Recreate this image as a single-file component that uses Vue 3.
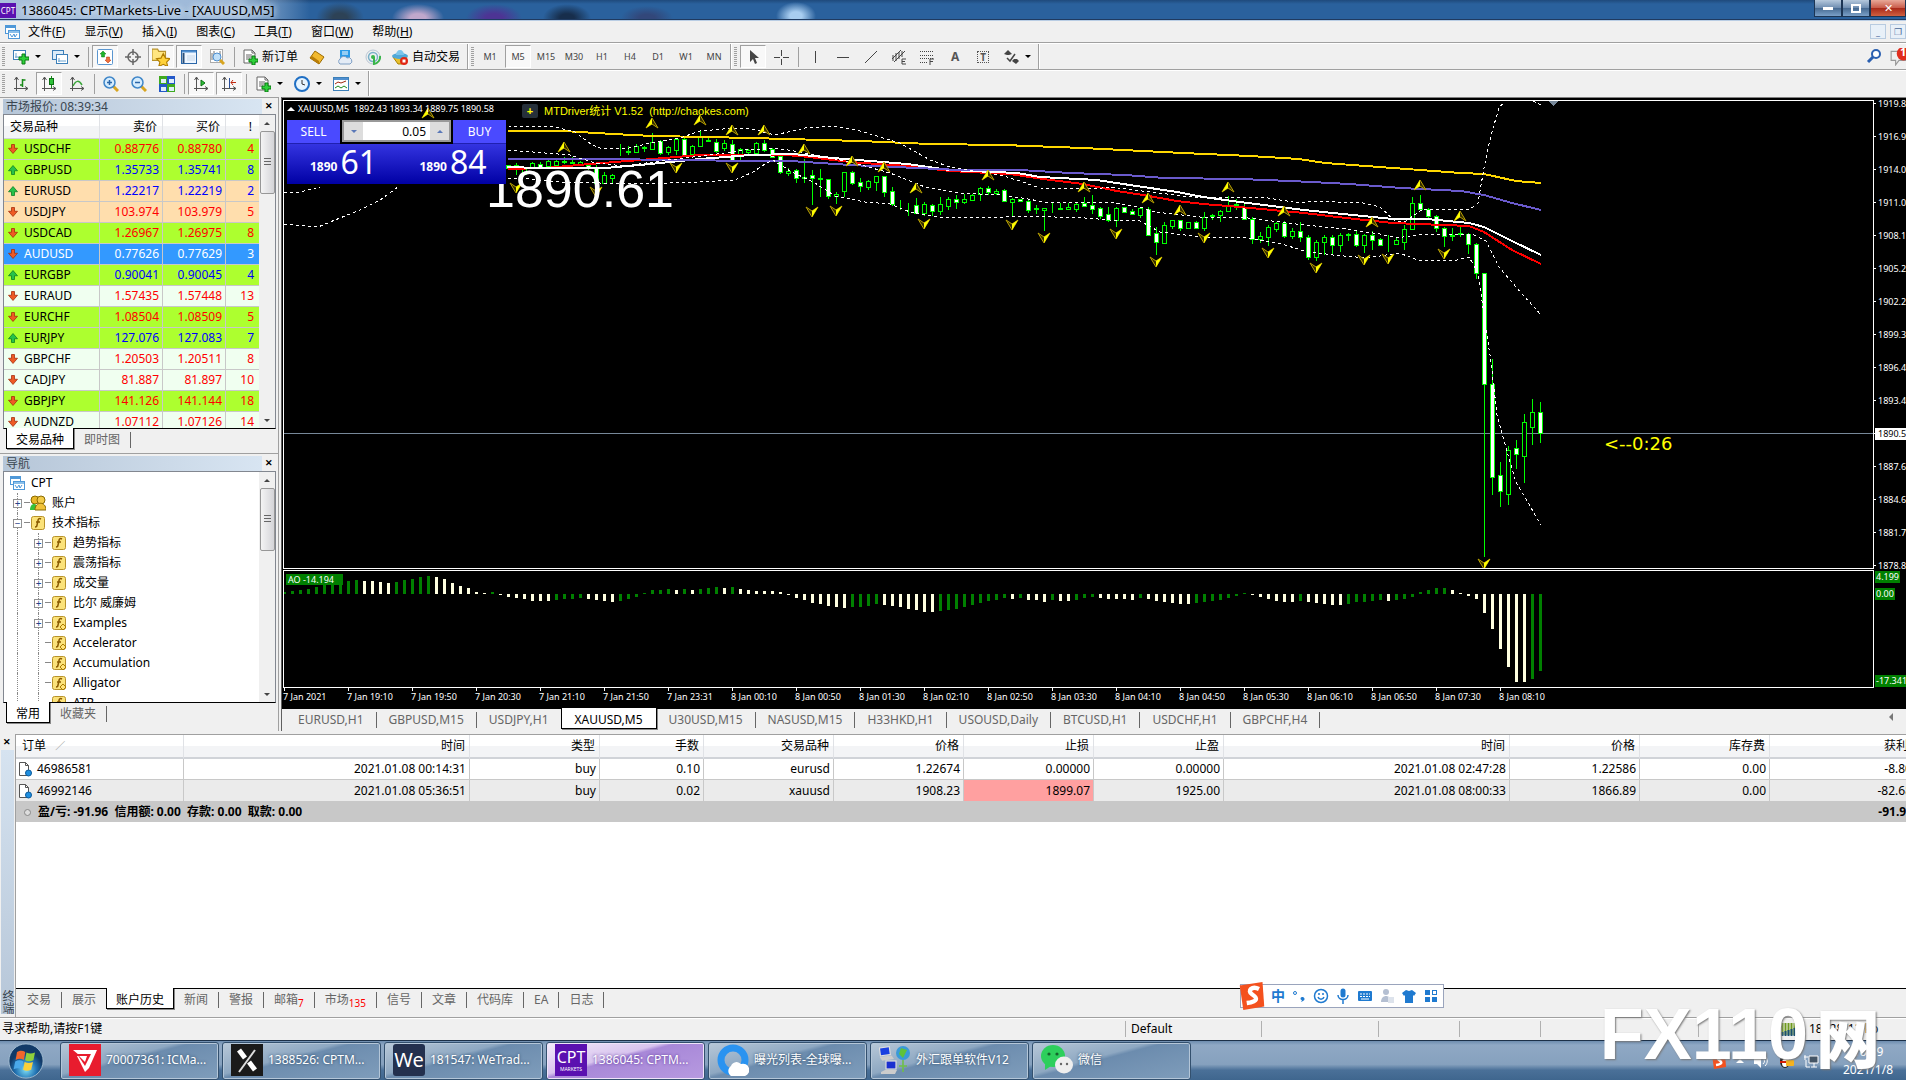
<script setup>
import { h } from 'vue'

const doc = '<path d="M2 1h8l3 3v10H2z" fill="#fff" stroke="#666"/><path d="M10 1v3h3M4 6h6M4 8h6M4 10h4" fill="none" stroke="#666"/>'
const plus = '<path d="M10 7h3v3h3v3h-3v3h-3v-3H7v-3h3z" fill="#2fd03a" stroke="#0b7a12"/>'
const axes = '<path d="M3.500 1v14M1 12.500h14M1.500 4l2-3 2 3M12 10.500l3 2-3 2" fill="none" stroke="#555"/>'
const fn = '<rect x="1.500" y="1.500" width="13" height="13" rx="2" fill="#fbe27a" stroke="#b8922a"/><path d="M11 4c-2-1-3 0-3 2l-1 4c0 2-1 2-2 2M6 7h4" fill="none" stroke="#8a5a00" stroke-width="1.500"/>'
const icons = {
  app: '<rect x="1.500" y="1.500" width="10" height="8" fill="#fff" stroke="#4f98d8"/><path d="M1 3h11" stroke="#4f98d8" stroke-width="2"/><rect x="4.500" y="6.500" width="11" height="8" fill="#fff" stroke="#4f98d8"/><path d="M5 8h10" stroke="#8cc0ea" stroke-width="2"/><path d="M6 10l2 3 2-3 1 3 2-3" fill="none" stroke="#4f98d8"/>',
  newchart: '<rect x="0.500" y="1.500" width="12" height="9" fill="#fff" stroke="#3c7fb8"/><path d="M3 4v5M2 8h8" stroke="#6aa3d0"/><path d="M9 5h3v3h4v3h-4v4H9v-4H6V8h3z" fill="#2fd03a" stroke="#0b7a12"/>',
  profiles: '<rect x="0.500" y="1.500" width="11" height="9" fill="#dcecf9" stroke="#3c7fb8"/><rect x="4.500" y="5.500" width="11" height="9" fill="#fff" stroke="#3c7fb8"/><path d="M6 12h8M7 9v4" stroke="#6aa3d0"/>',
  market: '<rect x="0.500" y="0.500" width="15" height="15" rx="1" fill="#fff" stroke="#5a96d0"/><path d="M6 2l3 3H7.500v3h-3V5H3z" fill="#1fb52c" stroke="#0b7a12" stroke-width=".5"/><path d="M11 14l3-3h-1.500V8h-3v3H8z" fill="#f0703c" stroke="#b03008" stroke-width=".5"/>',
  cross: '<circle cx="8" cy="8" r="5" fill="none" stroke="#666" stroke-width="1.500"/><path d="M8 0v6M8 10v6M0 8h6M10 8h6" stroke="#666" stroke-width="1.500"/>',
  star: '<path d="M0 3V1h5l1 2h6v8H0z" fill="#ffe680" stroke="#b8922a"/><path d="M10 5l2 4 4 .5-3 3 1 4-4-2-4 2 1-4-3-3 4-.5z" fill="#ffd23a" stroke="#b07d00"/>',
  navi: '<rect x="0.500" y="1.500" width="15" height="13" fill="#eef6ff" stroke="#2a66a8"/><path d="M1 2.500h14" stroke="#4f8fd0" stroke-width="2"/><path d="M2.500 4v10" stroke="#2a4f78" stroke-width="2"/><path d="M6 7h8M6 9h8M6 11h8" stroke="#c8d8ea"/>',
  tester: '<rect x="1.500" y="0.500" width="12" height="13" fill="#fff" stroke="#aaa"/><path d="M3 4v7M5 2v6M11 2v8" stroke="#777"/><circle cx="8" cy="8" r="4" fill="#bfe0fa" stroke="#4f8fd0"/><path d="M11 11l4 4" stroke="#d8a520" stroke-width="3"/>',
  order: doc + plus,
  gold: '<path d="M1 9l5-7 9 6-5 7z" fill="#f2b92e" stroke="#9c6b00"/><path d="M1 9l9 6v-3L3 7z" fill="#b97d08"/>',
  cloud: '<path d="M3 1h10v9H3z" fill="#2c9be8"/><path d="M5 3h6M5 5h6" stroke="#fff"/><path d="M3 15a3 3 0 010-5 4 4 0 017-1 3 3 0 013 6z" fill="#e4ecf6" stroke="#7f9fc4"/>',
  signal: '<circle cx="8" cy="8" r="7" fill="none" stroke="#b9c6d4"/><circle cx="8" cy="8" r="4.500" fill="none" stroke="#7ab0c8" stroke-width="1.500"/><circle cx="8" cy="8" r="2" fill="#39b54a"/><path d="M9 8v7a7 7 0 006-8" fill="none" stroke="#39b54a" stroke-width="2"/>',
  auto: '<path d="M1 8h14l-5 7H6z" fill="#e8c02c" stroke="#a98200"/><ellipse cx="8" cy="7" rx="8" ry="3" fill="#4fa8d8"/><path d="M4 6a4 5 0 018 0z" fill="#7cc4ea"/><circle cx="12" cy="12" r="4" fill="#e02613"/><rect x="10.500" y="10.500" width="3" height="3" fill="#fff"/>',
  cursor: '<path d="M5 1v12l3-3 2 5 2-1-2-5h4z" fill="#444"/>',
  cross2: '<path d="M8.500 1v6M8.500 10v6M1 8.500h6M10 8.500h6" stroke="#444"/>',
  vline: '<path d="M8.500 2v12" stroke="#444"/>',
  hline: '<path d="M2 8.500h12" stroke="#444"/>',
  diag: '<path d="M2 14L14 2" stroke="#444"/>',
  channel: '<path d="M1 10L10 1M3 13L14 2M2 6v6M5 4v8M8 3v7M11 2v6" stroke="#444"/><path d="M15 10h-4v5h4M11 12.500h3" fill="none" stroke="#444"/>',
  fibo: '<path d="M1 2.500h14M1 6.500h14M1 9.500h14M1 13.500h8" stroke="#444" stroke-dasharray="1 1"/><path d="M15 10h-4v6M11 12.500h3" fill="none" stroke="#444"/>',
  arrows: '<path d="M1 5l4-4 4 4-3 1H4z" fill="#444"/><path d="M4 9l3 3 5-7" stroke="#444" stroke-width="1.500" fill="none"/><path d="M9 12l2-2h3l2 2-3 3z" fill="#444"/>',
  bars: axes + '<path d="M9.500 3v8M9.500 4h3M7 9h3" stroke="#1a8a1a" stroke-width="1.500" fill="none"/>',
  candles: axes + '<path d="M10.500 0v12" stroke="#1a8a1a"/><rect x="8.500" y="2.500" width="4" height="6" fill="#2fc23a" stroke="#0d6f14"/>',
  linec: axes + '<path d="M4 10c3-6 6-6 9-1" stroke="#3aa53a" fill="none" stroke-width="1.500"/>',
  zin: '<path d="M10 10l5 5" stroke="#d8a520" stroke-width="3"/><circle cx="6.500" cy="6.500" r="5.500" fill="#d5ecfd" stroke="#3f86c8" stroke-width="1.500"/><path d="M4 6.500h5M6.500 4v5" stroke="#2a66a8" stroke-width="1.500"/>',
  zout: '<path d="M10 10l5 5" stroke="#d8a520" stroke-width="3"/><circle cx="6.500" cy="6.500" r="5.500" fill="#d5ecfd" stroke="#3f86c8" stroke-width="1.500"/><path d="M4 6.500h5" stroke="#2a66a8" stroke-width="1.500"/>',
  tiles: '<path d="M0 0h8v8H0zM8 8h8v8H8z" fill="#3faa1f"/><path d="M8 0h8v8H8zM0 8h8v8H0z" fill="#2458c8"/><path d="M2 3h5v4H2zM10 3h5v4h-5zM2 11h5v4H2zM10 11h5v4h-5z" fill="#dfeefa"/>',
  scroll: axes + '<path d="M8 4l4 3-4 3z" fill="#2fc23a" stroke="#0d6f14"/>',
  shift: axes + '<path d="M8.500 2v10" stroke="#2a4f9a"/><path d="M15 6.500H10M12 4l-2 2.500L12 9" stroke="#c02a10" fill="none"/>',
  indic: doc + plus,
  clock: '<circle cx="8" cy="8" r="7" fill="#e6f4ff" stroke="#1f6fc4" stroke-width="2"/><path d="M8 4v4l3 1" stroke="#333" fill="none"/>',
  tmpl: '<rect x="0.500" y="1.500" width="15" height="13" fill="#fff" stroke="#3c7fb8"/><path d="M1 3h14" stroke="#4f8fd0" stroke-width="2"/><path d="M2 8l3-2 3 1 5-2" stroke="#a02a10" fill="none"/><path d="M2 12l3-2 3 2 3-2 3 2" stroke="#1a8a1a" fill="none"/>',
  find: '<circle cx="10" cy="6" r="4" fill="#fff" stroke="#2a5fb0" stroke-width="2"/><path d="M7 9l-5 5" stroke="#2a5fb0" stroke-width="3"/>',
  chat: '<path d="M1 3h13v8H8l-3 4v-4H1z" fill="#eee" stroke="#999"/><circle cx="12" cy="5" r="6" fill="#e02c1c"/>',
  down: '<path d="M6 2h4v5h4l-6 7-6-7h4z" fill="#ee5a24" stroke="#a22a08"/>',
  up: '<path d="M6 14h4V9h4L8 2 2 9h4z" fill="#27c24a" stroke="#0a7a20"/>',
  people: '<circle cx="5" cy="5" r="4" fill="#e8b82a" stroke="#8a6a00"/><circle cx="11" cy="5" r="4" fill="#f2cb4a" stroke="#8a6a00"/><path d="M0 15c0-8 8-8 8 0z" fill="#35c23a"/><path d="M5 15c0-9 11-9 11 0z" fill="#f0c23a" stroke="#8a6a00"/>',
  fn,
  fn2: fn + '<path d="M12 9l3 3-3 3-3-3z" fill="#ffe27a" stroke="#a97d00"/>',
  sheet: '<path d="M2.500 1.500h6l3 3v10h-9z" fill="#fff" stroke="#555"/><path d="M8.500 1.500v3h3" fill="none" stroke="#555"/><circle cx="11.500" cy="12" r="3" fill="#1f8fe0" stroke="#0b5a9c"/>',
  smile: '<circle cx="8" cy="8" r="6.500" fill="none" stroke="#1f7ad0" stroke-width="1.500"/><path d="M5 9c1 3 5 3 6 0M6 5v2M10 5v2" fill="none" stroke="#1f7ad0" stroke-width="1.500"/>',
  mic: '<rect x="5.500" y="0.500" width="5" height="9" rx="2.500" fill="#1f7ad0"/><path d="M3 7c0 6 10 6 10 0M8 12v4" fill="none" stroke="#1f7ad0" stroke-width="1.500"/>',
  keys: '<rect x="1" y="3" width="14" height="10" rx="1" fill="#1f7ad0"/><path d="M3 6h10M3 8.500h10" stroke="#fff" stroke-dasharray="2 1"/><path d="M4 11h8" stroke="#fff"/>',
  person: '<circle cx="7" cy="4" r="3" fill="#b4bfd2"/><path d="M2 14c0-8 10-8 10 0z" fill="#b4bfd2"/><rect x="9" y="9" width="6" height="6" fill="#dde3ec"/>',
  shirt: '<path d="M5 2l3 1 3-1 4 3-2 3-1-1v8H4V7L3 8 1 5z" fill="#1f7ad0"/>',
  grid4: '<path d="M2 2h5v5H2zM9 9h5v5H9zM2 9h5v5H2z" fill="#1f7ad0"/><rect x="9.500" y="2.500" width="4" height="4" fill="none" stroke="#1f7ad0"/>',
  punct: '<circle cx="4" cy="5" r="1.500" fill="none" stroke="#1f7ad0"/><path d="M11 9a2 2 0 011 4l-2 1 1-2a1.500 1.500 0 010-3z" fill="#1f7ad0"/>',
  sogou: '<path d="M1 2l13-2 1 14-12 2z" fill="#f4511e"/><path d="M12 4c-4-2-7 1-4 3s4 4-3 5" fill="none" stroke="#fff" stroke-width="2.500"/>',
  speaker: '<path d="M1 5h3l4-4v14l-4-4H1z" fill="#fff"/><path d="M10 5c2 2 2 4 0 6M12 3c3 3 3 7 0 10" stroke="#fff" fill="none"/>',
  qq: '<ellipse cx="7" cy="8" rx="5" ry="7" fill="#222"/><ellipse cx="7" cy="10" rx="3" ry="4" fill="#fff"/><path d="M2 9h10" stroke="#d81e06" stroke-width="2"/><rect x="8" y="7" width="8" height="6" rx="1" fill="#f5b21e"/>',
  net: '<path d="M6 3h9v7H6z" fill="#456" stroke="#fff"/><path d="M8 14h6M11 10v4M2 2v5M1 4h4M3 7v7h4" stroke="#fff" fill="none"/>',
  levels: '<path d="M1.500 2v12M4.500 2v12M7.500 2v12M10.500 2v12M13.500 2v12" stroke="#6f9a1f" stroke-width="2"/><path d="M1.500 11v4M4.500 10v5M7.500 9v6M10.500 8v7M13.500 7v8" stroke="#184f70" stroke-width="2"/>',
  win: '<defs><radialGradient id="orb" cy=".75"><stop offset="0" stop-color="#7fe0f8"/><stop offset=".6" stop-color="#2374b4"/><stop offset="1" stop-color="#123a68"/></radialGradient></defs><circle cx="8" cy="8" r="7.600" fill="url(#orb)" stroke="#a5bfd4" stroke-width=".4"/><path d="M4 4c1.500-.8 2.500-.6 3.700 0L7 7.500c-1-.6-2.200-.7-3.600 0z" fill="#f2662c"/><path d="M8.200 4.200c1.200.7 2.400.6 3.800 0l-.7 3.500c-1.400.6-2.600.6-3.700 0z" fill="#8fcf3c"/><path d="M3.200 8.200c1.400-.7 2.500-.6 3.600 0L6 11.700c-1-.6-2.100-.7-3.500 0z" fill="#4aa8ea"/><path d="M7.400 8.400c1.200.7 2.400.6 3.700 0l-.8 3.500c-1.300.6-2.500.6-3.600 0z" fill="#fbd03a"/>',
  vt: '<rect width="16" height="16" fill="#e81c2e"/><path d="M2 3h12l-4 9-2 2-4-8h5L8 8" fill="#fff"/><path d="M4 5h7l-3 6z" fill="#e81c2e"/><path d="M5 6h4l-1 3z" fill="#fff"/>',
  xm: '<rect width="16" height="16" fill="#1a1a1a"/><path d="M4 3l3 4M9 9l3 4" stroke="#fff" stroke-width="2.500"/><path d="M12 3L4 14" stroke="#ddd"/>',
  qb: '<circle cx="8" cy="8" r="6" fill="none" stroke="#2a93f0" stroke-width="3.500"/><path d="M7 16a3 3 0 010-5 3 3 0 015-1 3 3 0 012 6z" fill="#fff"/>',
  pcs: '<g transform="rotate(-8 4 4)"><rect x="0.500" y="1.500" width="5" height="4" fill="#1a3fe0" stroke="#ddd" stroke-width=".6"/><path d="M0 6h6l1 2H1z" fill="#ccc"/></g><rect x="3.500" y="8.500" width="5" height="4" fill="#1a2fd0" stroke="#ddd" stroke-width=".6"/><path d="M1 14l2-1h6l-1 2H1z" fill="#ccc"/><circle cx="12" cy="4.500" r="3.500" fill="#3a9ad8"/><path d="M11 2l3 1-2 4-2-2z" fill="#5fc23a"/><path d="M12 8v6M10 11h4" stroke="#6fbf4a" stroke-width=".8"/>',
  wx: '<ellipse cx="6" cy="6" rx="6" ry="5.500" fill="#2dcf5c"/><path d="M2 10l0 3 3-2z" fill="#2dcf5c"/><circle cx="4" cy="5" r=".8" fill="#14642c"/><circle cx="8" cy="5" r=".8" fill="#14642c"/><ellipse cx="11.500" cy="10.500" rx="4.500" ry="4.200" fill="#eee"/><circle cx="10" cy="10" r=".6" fill="#666"/><circle cx="13" cy="10" r=".6" fill="#666"/>',
}
const Ico = (p) => h('svg', { width: p.s || 16, height: p.s || 16, viewBox: '0 0 16 16', 'aria-hidden': 'true', innerHTML: icons[p.n] })
Ico.props = ['n', 's']

const menus = [['文件', 'F'], ['显示', 'V'], ['插入', 'I'], ['图表', 'C'], ['工具', 'T'], ['窗口', 'W'], ['帮助', 'H']]
const frames = ['M1', 'M5', 'M15', 'M30', 'H1', 'H4', 'D1', 'W1', 'MN']

const quotes = [
  ['USDCHF', '0.88776', '0.88780', 4, 'down', 'lime'], ['GBPUSD', '1.35733', '1.35741', 8, 'up', 'lime'],
  ['EURUSD', '1.22217', '1.22219', 2, 'up', 'sand'], ['USDJPY', '103.974', '103.979', 5, 'down', 'sand'],
  ['USDCAD', '1.26967', '1.26975', 8, 'down', 'lime'], ['AUDUSD', '0.77626', '0.77629', 3, 'down', 'sel'],
  ['EURGBP', '0.90041', '0.90045', 4, 'up', 'lime'], ['EURAUD', '1.57435', '1.57448', 13, 'down', 'mint'],
  ['EURCHF', '1.08504', '1.08509', 5, 'down', 'lime'], ['EURJPY', '127.076', '127.083', 7, 'up', 'lime'],
  ['GBPCHF', '1.20503', '1.20511', 8, 'down', 'mint'], ['CADJPY', '81.887', '81.897', 10, 'down', 'mint'],
  ['GBPJPY', '141.126', '141.144', 18, 'down', 'lime'], ['AUDNZD', '1.07112', '1.07126', 14, 'down', 'mint'],
]
const tree = [
  [1, '+', 'people', '账户'], [1, '−', 'fn', '技术指标'], [2, '+', 'fn', '趋势指标'], [2, '+', 'fn', '震荡指标'],
  [2, '+', 'fn', '成交量'], [2, '+', 'fn', '比尔 威廉姆'], [2, '+', 'fn2', 'Examples'], [2, '', 'fn2', 'Accelerator'],
  [2, '', 'fn2', 'Accumulation'], [2, '', 'fn2', 'Alligator'], [2, '', 'fn2', 'ATR'],
]

const FIRST = 28
/* high, body top, body bottom, low, 1 = filled */
const bars = [
  [70,70,73,74,1],[68,70,73,80,1],[72,72,79,80,0],[67,68,72,74,0],[67,69,72,73,1],[65,66,71,72,0],[64,66,70,71,0],[62,66,67,69,0],
  [62,67,68,69,0],[66,67,69,71,0],[69,70,73,75,1],[70,73,88,92,1],[77,80,88,89,0],[79,80,83,88,0],[49,56,56,61,0],[51,56,57,60,0],
  [49,51,57,58,0],[51,52,53,57,0],[38,47,54,55,0],[45,46,58,60,1],[51,52,57,60,0],[43,44,55,60,0],[42,44,61,62,1],[50,51,59,60,0],
  [36,41,51,52,0],[43,45,46,47,0],[44,47,56,58,1],[45,48,53,56,0],[45,49,65,66,1],[53,54,60,65,0],[54,55,57,60,0],[47,48,58,59,0],
  [45,48,55,57,1],[53,54,62,63,1],[60,61,77,79,1],[73,76,78,81,0],[74,75,83,88,1],[64,82,83,88,0],[75,80,83,110,1],[74,83,84,102,0],
  [84,84,101,104,1],[97,99,101,109,0],[77,77,96,102,0],[76,77,88,90,1],[83,87,91,97,1],[85,86,92,95,0],[81,81,87,96,0],[81,81,97,102,1],
  [92,96,109,111,1],[105,109,109,115,0],[108,109,109,121,0],[103,110,118,118,1],[107,109,118,121,0],[109,110,116,121,1],[102,109,116,120,0],
  [102,104,111,115,0],[100,104,107,114,1],[99,104,107,109,0],[99,100,105,106,0],[92,93,99,106,0],[91,93,97,100,1],[94,96,98,100,0],
  [94,95,106,107,1],[103,104,107,122,0],[104,104,106,107,1],[105,106,115,118,1],[110,113,114,119,0],[113,113,115,136,0],[107,113,113,118,0],
  [108,113,114,114,0],[108,112,114,114,0],[108,109,114,117,0],[102,108,111,111,1],[100,110,114,119,1],[112,113,121,124,1],[112,119,125,127,1],
  [112,113,125,132,0],[112,112,117,118,1],[114,116,119,120,1],[112,113,120,123,0],[112,114,140,140,1],[132,138,147,160,1],[127,130,148,148,0],
  [125,125,131,134,0],[125,125,133,136,1],[127,127,133,133,0],[126,127,133,134,1],[117,122,133,136,0],[119,120,121,125,0],[115,116,120,127,0],
  [101,110,116,117,0],[104,109,110,115,0],[108,112,124,125,1],[122,124,144,149,1],[137,141,144,148,0],[130,132,142,151,0],[127,128,134,137,0],
  [126,128,141,143,1],[133,136,141,144,0],[127,136,142,147,1],[140,142,162,165,1],[145,147,162,166,0],[140,142,147,160,0],[140,142,150,159,1],
  [138,140,150,157,0],[138,139,140,146,0],[136,139,150,152,1],[139,140,150,158,0],[136,140,145,155,1],[143,144,150,151,1],[140,149,149,157,0],
  [143,145,149,150,0],[130,134,147,155,0],[102,108,134,135,0],[100,108,114,116,1],[113,114,121,124,1],[120,121,133,137,1],[132,133,141,152,1],
  [133,140,141,146,0],[132,138,139,142,0],[138,139,149,159,1],[148,149,178,184,1],[178,178,289,462,1],[264,289,382,400,1],[367,380,396,412,1],
  [351,355,399,410,0],[345,353,359,374,1],[319,327,361,388,0],[304,317,332,350,0],[307,317,338,348,1],
].map((b, i) => ({ x: 284 + 8 * (i + FIRST), hi: b[0], top: b[1], h: b[2] - b[1], lo: b[3], full: b[4] }))

const bands = [
  '508,31 555,32 575,37 592,50 600,53 625,54 650,48 680,43 700,36 735,33 752,34 775,40 805,33 833,31 860,36 900,48 930,65 950,72 1000,80 1020,86 1040,93 1095,94 1110,92 1150,97 1200,103 1215,102 1268,103 1299,108 1312,106 1363,108 1380,112 1395,126 1406,126 1423,114 1469,115 1478,108 1484,73 1491,40 1499,13 1505,6',
  '1533,6 1541,10',
  '508,55 545,58 570,60 595,68 625,71 660,66 710,60 745,55 775,53 800,57 850,67 890,78 925,92 960,98 1000,100 1022,103 1045,107 1110,107 1140,112 1155,117 1200,122 1240,122 1304,130 1346,134 1380,139 1397,143 1423,139 1474,140 1486,146 1499,172 1516,192 1541,220',
  '508,83 530,84 560,87 640,89 700,87 735,85 753,77 765,69 773,65 790,76 815,88 835,101 865,107 890,109 910,117 940,122 985,123 1025,121 1085,123 1110,125 1140,126 1160,137 1210,143 1240,142 1282,149 1304,156 1333,160 1367,163 1399,158 1418,165 1457,165 1469,162 1478,178 1484,220 1491,267 1497,320 1508,360 1516,387 1541,430',
  '284,97 300,97 320,92',
  '284,129 318,132 335,125 360,115 380,105 398,92',
]
const averages = [
  ['#ffd700', '508,36 563,36 613,39 653,41 707,42 750,43 860,46 930,49 1003,50 1083,53 1183,58 1250,61 1299,64 1325,68 1393,73 1461,78 1484,79 1516,86 1541,88'],
  ['#ff0000', '508,74 545,73 590,69 640,65 700,60 783,60 800,61 850,67 907,71 950,76 1010,79 1043,84 1083,89 1117,96 1143,100 1177,106 1203,109 1240,112 1304,118 1346,123 1393,128 1469,131 1484,137 1512,155 1541,169'],
  ['#ffffff', '508,72 540,73 605,73 640,70 700,64 750,60 793,59 833,63 883,67 907,69 950,75 1017,78 1040,82 1097,85 1123,89 1177,97 1203,102 1240,107 1304,115 1333,118 1393,124 1427,124 1469,128 1484,132 1512,146 1541,160'],
  ['#6a5acd', '508,64 600,64 680,65 750,66 790,66 850,70 917,73 960,75 1020,75 1070,78 1125,80 1165,83 1240,84 1291,86 1350,89 1401,93 1461,96 1484,100 1512,108 1541,115'],
]
const peaks = [[428,18],[564,52],[652,28],[700,25],[732,35],[764,35],[804,54],[852,66],[884,72],[916,93],[988,80],[1084,92],[1148,103],[1180,115],[1228,92],[1284,116],[1372,127],[1420,90],[1460,121]]
const troughs = [[516,93],[596,97],[676,73],[732,73],[812,117],[836,116],[924,129],[1012,130],[1044,143],[1116,139],[1156,167],[1204,143],[1268,158],[1316,173],[1364,165],[1388,164],[1444,159],[1484,469]]

const prices = ['1919.80', '1916.90', '1914.00', '1911.05', '1908.15', '1905.20', '1902.25', '1899.35', '1896.40', '1893.45', '1890.58', '1887.60', '1884.65', '1881.75', '1878.80']
const osc = [2,3,4,5,7,9,11,12,13,14,13,13,12,11,12,14,15,17,18,17,15,11,8,6,2,1,2,-1,-3,-4,-5,-7,-7,-7,-6,-5,-5,-4,-5,-6,-7,-8,-7,-5,-3,1,4,4,5,4,5,4,5,6,7,6,7,5,4,3,3,3,2,-1,-4,-6,-9,-10,-12,-13,-14,-13,-13,-12,-10,-11,-12,-13,-15,-16,-18,-18,-17,-16,-15,-13,-11,-9,-7,-6,-4,-5,-4,-6,-6,-8,-6,-7,-7,-6,-4,-3,-4,-5,-5,-5,-6,-4,-5,-7,-8,-9,-10,-10,-9,-8,-7,-6,-4,-2,1,-1,-3,-5,-7,-8,-8,-7,-8,-9,-10,-11,-11,-10,-8,-8,-7,-6,-7,-6,-5,-3,2,4,6,6,4,1,-2,-5,-19,-35,-55,-73,-88,-88,-85,-77]
let rising = true
const oscBars = osc.map((v, i) => {
  if (i && v !== osc[i - 1]) rising = v > osc[i - 1]
  return { x: 8 * i - 1, y: v > 0 ? 23 - v : 23, h: Math.abs(v), c: rising ? '#008000' : '#ffffe0' }
})
const times = ['7 Jan 2021', '7 Jan 19:10', '7 Jan 19:50', '7 Jan 20:30', '7 Jan 21:10', '7 Jan 21:50', '7 Jan 23:31', '8 Jan 00:10', '8 Jan 00:50', '8 Jan 01:30', '8 Jan 02:10', '8 Jan 02:50', '8 Jan 03:30', '8 Jan 04:10', '8 Jan 04:50', '8 Jan 05:30', '8 Jan 06:10', '8 Jan 06:50', '8 Jan 07:30', '8 Jan 08:10']
const charts = ['EURUSD,H1', 'GBPUSD,M15', 'USDJPY,H1', 'XAUUSD,M5', 'U30USD,M15', 'NASUSD,M15', 'H33HKD,H1', 'USOUSD,Daily', 'BTCUSD,H1', 'USDCHF,H1', 'GBPCHF,H4']

const heads = ['时间', '类型', '手数', '交易品种', '价格', '止损', '止盈', '时间', '价格', '库存费', '获利']
const widths = [168, 286, 130, 104, 130, 130, 130, 130, 286, 130, 130, 146]
const orders = [
  ['46986581', '2021.01.08 00:14:31', 'buy', '0.10', 'eurusd', '1.22674', '0.00000', '0.00000', '2021.01.08 02:47:28', '1.22586', '0.00', '-8.80'],
  ['46992146', '2021.01.08 05:36:51', 'buy', '0.02', 'xauusd', '1908.23', '1899.07', '1925.00', '2021.01.08 08:00:33', '1866.89', '0.00', '-82.68'],
]
const panes = [['交易'], ['展示'], ['账户历史'], ['新闻'], ['警报'], ['邮箱', '7'], ['市场', '135'], ['信号'], ['文章'], ['代码库'], ['EA'], ['日志']]
const tasks = [['vt', '70007361: ICMa...'], ['xm', '1388526: CPTM...'], ['we', '181547: WeTrad...'], ['cpt', '1386045: CPTM...'], ['qb', '曝光列表-全球曝...'], ['pcs', '外汇跟单软件V12'], ['wx', '微信']]
</script>

<template>
  <div class="app">
    <header class="title">
      <span class="logo">CPT</span>
      <span class="caption">1386045: CPTMarkets-Live - [XAUUSD,M5]</span>
      <span class="winbtns">
        <button aria-label="最小化"><i class="min"></i></button><button aria-label="还原"><i class="max"></i></button><button class="close" aria-label="关闭">✕</button>
      </span>
    </header>

    <nav class="menu">
      <Ico n="app" />
      <a v-for="m in menus" :key="m[1]" href="#">{{ m[0] }}(<u>{{ m[1] }}</u>)</a>
      <span class="mdi"><button aria-label="最小化">_</button><button aria-label="还原">❐</button></span>
    </nav>

    <div class="bar">
      <i class="grip"></i>
      <button class="tb wide" aria-label="新图表"><Ico n="newchart" /><i class="dd"></i></button>
      <button class="tb wide" aria-label="配置"><Ico n="profiles" /><i class="dd"></i></button>
      <i class="sep"></i>
      <button class="tb on" aria-label="市场报价"><Ico n="market" /></button>
      <button class="tb" aria-label="数据窗口"><Ico n="cross" /></button>
      <button class="tb on" aria-label="导航"><Ico n="star" s="18" /></button>
      <button class="tb on" aria-label="终端"><Ico n="navi" /></button>
      <button class="tb" aria-label="测试"><Ico n="tester" /></button>
      <i class="sep"></i>
      <button class="tb lbl"><Ico n="order" />新订单</button>
      <button class="tb" aria-label="MetaEditor"><Ico n="gold" /></button>
      <button class="tb" aria-label="云"><Ico n="cloud" /></button>
      <button class="tb" aria-label="信号"><Ico n="signal" /></button>
      <button class="tb lbl"><Ico n="auto" />自动交易</button>
      <i class="edge"></i><i class="grip"></i>
      <button v-for="f in frames" :key="f" class="tb tf" :class="{ on: f === 'M5' }">{{ f }}</button>
      <i class="edge"></i><i class="grip"></i>
      <button class="tb on" aria-label="光标"><Ico n="cursor" /></button>
      <button class="tb" aria-label="十字准线"><Ico n="cross2" /></button>
      <i class="sep"></i>
      <button class="tb" aria-label="垂直线"><Ico n="vline" /></button>
      <button class="tb" aria-label="水平线"><Ico n="hline" /></button>
      <button class="tb" aria-label="趋势线"><Ico n="diag" /></button>
      <button class="tb" aria-label="通道"><Ico n="channel" /></button>
      <button class="tb" aria-label="斐波纳契"><Ico n="fibo" /></button>
      <button class="tb glyph">A</button>
      <button class="tb glyph"><span class="tbox">T</span></button>
      <button class="tb wide" aria-label="箭头"><Ico n="arrows" /><i class="dd"></i></button>
      <i class="edge"></i>
      <span class="right"><Ico n="find" /><span class="chat"><Ico n="chat" s="18" /><b>1</b></span></span>
    </div>

    <div class="bar second">
      <i class="grip"></i>
      <button class="tb" aria-label="柱状图"><Ico n="bars" /></button>
      <button class="tb on" aria-label="阴阳烛"><Ico n="candles" /></button>
      <button class="tb" aria-label="折线图"><Ico n="linec" /></button>
      <i class="sep"></i>
      <button class="tb" aria-label="放大"><Ico n="zin" /></button>
      <button class="tb" aria-label="缩小"><Ico n="zout" /></button>
      <button class="tb" aria-label="平铺"><Ico n="tiles" /></button>
      <i class="sep"></i>
      <button class="tb on" aria-label="自动滚动"><Ico n="scroll" /></button>
      <button class="tb on" aria-label="图表平移"><Ico n="shift" /></button>
      <i class="sep"></i>
      <button class="tb wide" aria-label="指标"><Ico n="indic" /><i class="dd"></i></button>
      <button class="tb wide" aria-label="周期"><Ico n="clock" /><i class="dd"></i></button>
      <button class="tb wide" aria-label="模板"><Ico n="tmpl" /><i class="dd"></i></button>
      <i class="edge"></i>
    </div>

    <main class="work">
      <aside class="side">
        <section class="panel">
          <h2><span>市场报价: 08:39:34</span><button aria-label="关闭">✕</button></h2>
          <div class="box quotes">
            <div class="clip">
              <table>
                <thead><tr><th>交易品种</th><th>卖价</th><th>买价</th><th>!</th></tr></thead>
                <tbody>
                  <tr v-for="q in quotes" :key="q[0]" :class="[q[5], q[4]]">
                    <td><Ico :n="q[4]" s="12" />{{ q[0] }}</td><td>{{ q[1] }}</td><td>{{ q[2] }}</td><td>{{ q[3] }}</td>
                  </tr>
                </tbody>
              </table>
            </div>
            <div class="scroll"><i class="ar up"></i><i class="thumb"></i><i class="ar dn"></i></div>
          </div>
          <div class="tabs"><button class="cur">交易品种</button><button>即时图</button></div>
        </section>
        <section class="panel">
          <h2><span>导航</span><button aria-label="关闭">✕</button></h2>
          <div class="box nav">
            <ul class="clip">
              <li class="root"><Ico n="app" />CPT</li>
              <li v-for="t in tree" :key="t[3]" :class="'l' + t[0]">
                <span class="branch"><i v-if="t[1]" class="pm">{{ t[1] }}</i></span><Ico :n="t[2]" />{{ t[3] }}
              </li>
            </ul>
            <div class="scroll"><i class="ar up"></i><i class="thumb"></i><i class="ar dn"></i></div>
          </div>
          <div class="tabs"><button class="cur">常用</button><button>收藏夹</button></div>
        </section>
      </aside>

      <div class="mdiarea">
        <div class="chart">
          <div class="plot">
            <svg class="main" shape-rendering="crispEdges">
              <g transform="translate(-284 -6)">
                <path d="M284 338.500H4000" stroke="#778899" />
                <g stroke="#00ff00">
                  <template v-for="b in bars" :key="b.x">
                    <path :d="`M${b.x + 0.5} ${b.hi}V${b.lo}`" />
                    <rect :x="b.x - 1.5" :y="b.top + 0.5" width="4" :height="b.h" :fill="b.full ? '#fff' : '#000'" />
                  </template>
                </g>
                <polyline v-for="a in averages" :key="a[0]" :points="a[1]" fill="none" :stroke="a[0]" stroke-width="2" />
                <polyline v-for="p in bands" :key="p" :points="p" fill="none" stroke="#fff" stroke-dasharray="3 3" />
                <g shape-rendering="auto">
                  <g v-for="p in peaks" :key="'u' + p" :transform="`translate(${p[0]} ${p[1]})`">
                    <path d="M0-5L-6 5L0 1L6 5Z" fill="#332b00" stroke="#b8a000" /><path d="M0-5L-6 5L0 1Z" fill="#ffff00" />
                  </g>
                  <g v-for="p in troughs" :key="'d' + p" :transform="`translate(${p[0]} ${p[1]})`">
                    <path d="M0 5L-6-5L0-1L6-5Z" fill="#332b00" stroke="#b8a000" /><path d="M0 5L6-5L0-1Z" fill="#ffff00" />
                  </g>
                </g>
                <path d="M1548 6h10l-5 5z" fill="#778899" />
              </g>
            </svg>
            <p class="ohlc">XAUUSD,M5&nbsp; 1892.43 1893.34 1889.75 1890.58</p>
            <p class="stat"><button>+</button>MTDriver统计 V1.52&nbsp; (http://chaokes.com)</p>
            <p class="big">1890.61</p>
            <p class="count">&lt;--0:26</p>
            <form class="trade">
              <button type="button" class="side-t">SELL</button>
              <span class="lots"><i><b class="d"></b></i><input aria-label="手数" value="0.05"><i><b class="u"></b></i></span>
              <button type="button" class="side-t">BUY</button>
              <button type="button" class="px">1890 <em>61</em></button>
              <button type="button" class="px">1890 <em>84</em></button>
            </form>
          </div>
          <ol class="scale"><li v-for="p in prices" :key="p" :class="{ now: p === '1890.58' }"><span>{{ p }}</span></li></ol>
          <div class="plot">
            <svg class="sub" shape-rendering="crispEdges"><rect v-for="b in oscBars" :key="b.x" :x="b.x" :y="b.y" width="3" :height="b.h" :fill="b.c" /></svg>
            <p class="ao">AO -14.194</p>
          </div>
          <ol class="levels"><li>4.199</li><li>0.00</li><li>-17.341</li></ol>
          <ol class="times"><li v-for="t in times" :key="t">{{ t }}</li></ol>
        </div>
        <div class="tabs ctabs"><button v-for="c in charts" :key="c" :class="{ cur: c === 'XAUUSD,M5' }">{{ c }}</button><i class="more"></i></div>
      </div>
    </main>

    <section class="terminal">
      <div class="strip"><button aria-label="关闭">✕</button><div><span>终端</span></div></div>
      <div class="body">
        <div class="grid">
          <table>
            <colgroup><col v-for="(w, i) in widths" :key="i" :style="{ width: w + 'px' }"></colgroup>
            <thead><tr><th>订单 <small>∕</small></th><th v-for="(t, i) in heads" :key="i">{{ t }}</th></tr></thead>
            <tbody>
              <tr v-for="o in orders" :key="o[0]">
                <td v-for="(v, i) in o" :key="i" :class="{ hit: v === '1899.07' }"><Ico v-if="!i" n="sheet" />{{ v }}</td>
              </tr>
              <tr class="sum"><td colspan="11"><i></i>盈/亏: -91.96&nbsp; 信用额: 0.00&nbsp; 存款: 0.00&nbsp; 取款: 0.00</td><td>-91.96</td></tr>
            </tbody>
          </table>
        </div>
        <div class="tabs"><button v-for="p in panes" :key="p[0]" :class="{ cur: p[0] === '账户历史' }">{{ p[0] }}<sub v-if="p[1]">{{ p[1] }}</sub></button></div>
      </div>
      <div class="ime">
        <Ico n="sogou" s="28" /><b>中</b><Ico n="punct" /><Ico n="smile" /><Ico n="mic" /><Ico n="keys" /><Ico n="person" /><Ico n="shirt" /><Ico n="grid4" />
      </div>
    </section>

    <div class="status">
      <span class="hint">寻求帮助,请按F1键</span><span class="c1">Default</span><span class="c2"></span><span class="c3"></span><span class="c3"></span><span class="c4"></span>
      <span class="net"><Ico n="levels" />18928/12 kb</span>
    </div>

    <footer class="task">
      <button class="start" aria-label="开始"><Ico n="win" s="36" /></button>
      <button v-for="t in tasks" :key="t[1]" class="win" :class="{ active: t[0] === 'cpt' }">
        <span v-if="t[0] === 'we'" class="tile we">We</span>
        <span v-else-if="t[0] === 'cpt'" class="tile cpt">CPT<small>MARKETS</small></span>
        <Ico v-else :n="t[0]" s="32" />{{ t[1] }}
      </button>
      <span class="tray"><Ico n="sogou" /><i class="tri"></i><Ico n="speaker" /><Ico n="qq" /><Ico n="net" /></span>
      <time>16:39<br>2021/1/8</time>
    </footer>
    <div class="mark"><span>FX110</span><b>网</b></div>
  </div>
</template>

<style>
body { margin: 0; background: #f0f0f0; }
</style>

<style scoped>
.app { position: relative; display: flex; flex-direction: column; min-height: 100vh; overflow: hidden; background: #f0f0f0; color: #000; font: 12px/16px "Noto Sans", "Noto Sans CJK SC", sans-serif; }
button, input { font: inherit; color: inherit; border: 0; padding: 0; margin: 0; background: none; }
p, h2, ol, ul { margin: 0; padding: 0; list-style: none; font-size: 12px; font-weight: normal; }
svg { flex: none; display: block; }
i { font-style: normal; }

.title { display: flex; align-items: center; height: 20px; border-bottom: 1px solid #b9cde4; box-shadow: inset 0 -1px #1f3a60; background:
  radial-gradient(24px 16px at 340px 18px, #2d4256 30%, transparent), radial-gradient(26px 14px at 418px 18px, #c0a8cc 30%, transparent),
  radial-gradient(28px 14px at 494px 18px, #4d3494 30%, transparent), radial-gradient(24px 14px at 567px 18px, #172e4c 30%, transparent),
  radial-gradient(26px 12px at 647px 18px, #32477a 30%, transparent), radial-gradient(20px 14px at 796px 16px, #a8cdf0 30%, transparent),
  linear-gradient(90deg, #a9c0dc, #9cb8d8 240px, transparent 310px), linear-gradient(#1f4a7c, #2a619d 4px, #2a619d); }
.logo { width: 16px; height: 15px; background: #5a10b0; color: #fff; font-size: 8px; line-height: 15px; text-align: center; }
.caption { margin-left: 5px; font-size: 13px; text-shadow: 0 0 6px #dfe9f5, 0 0 6px #dfe9f5; }
.winbtns { display: flex; align-self: flex-start; margin-left: auto; }
.winbtns button { display: flex; align-items: center; justify-content: center; width: 28px; height: 17px; box-sizing: border-box; border: 1px solid #1c3554; border-top: 0; background: linear-gradient(#b5c8dc, #6d8cb0 50%, #45688f 50%, #7aa0c8); color: #fff; font-size: 11px; }
.winbtns .close { width: 36px; background: linear-gradient(#e8a898, #c85a48 50%, #a82818 50%, #d06040); }
.min { width: 10px; height: 3px; background: #fff; }
.max { width: 6px; height: 5px; border: 2px solid #fff; }

.menu { display: flex; align-items: center; gap: 19px; height: 21px; padding-left: 4px; border-bottom: 1px solid #a0a0a0; }
.menu svg { margin-right: -11px; }
.menu a { color: #000; text-decoration: none; }
.mdi { display: flex; gap: 4px; margin-left: auto; }
.mdi button { width: 16px; height: 15px; border: 1px solid #b8cbe0; background: #e8f0f8; color: #47689a; font-size: 9px; line-height: 12px; }

.bar { display: flex; align-items: center; height: 25px; border-top: 1px solid #fff; border-bottom: 1px solid #a0a0a0; }
.bar.second { border-bottom-color: #f0f0f0; }
.grip { width: 3px; height: 20px; margin: 0 3px 0 2px; background: repeating-linear-gradient(#a0a0a0 0 1px, #f0f0f0 1px 2px); }
.sep { width: 1px; height: 20px; margin: 0 3px 0 2px; background: #a0a0a0; }
.edge { width: 1px; height: 25px; margin-left: 1px; background: #a0a0a0; border-right: 1px solid #fff; }
.tb { display: flex; align-items: center; justify-content: center; box-sizing: border-box; width: 26px; height: 23px; margin-right: 2px; }
.tb.on { border: 1px solid; border-color: #a0a0a0 #fff #fff #a0a0a0; background: #f8f8f8; }
.tb.wide { gap: 6px; width: 37px; }
.tb.lbl { gap: 4px; width: auto; padding: 0 4px; }
.tb.tf { font-size: 9px; color: #444; }
.glyph { font-weight: bold; color: #555; }
.tbox { width: 10px; border: 1px dotted #555; font-size: 10px; line-height: 10px; }
.dd { border: 3px solid transparent; border-top-color: #000; border-bottom: 0; }
.right { display: flex; gap: 8px; margin-left: auto; }
.chat { position: relative; width: 16px; }
.chat b { position: absolute; top: -4px; left: 10px; color: #fff; font-size: 11px; }

.work { display: flex; }
.side { width: 278px; flex: none; border-top: 1px solid #a0a0a0; border-right: 1px solid #a0a0a0; }
.panel + .panel { border-top: 1px solid #a0a0a0; margin-top: 1px; padding-top: 1px; }
h2 { display: flex; align-items: center; height: 16px; padding-left: 3px; color: #3a4650; }
h2 span { width: 256px; padding-left: 3px; background: linear-gradient(90deg, #b6c6d8, #d8e5f2); line-height: 15px; }
h2 button, .strip button { width: 14px; color: #000; font-size: 9px; font-weight: bold; }
.box { display: flex; margin: 0 2px 0 3px; border: 1px solid #828790; border-bottom: 1px solid #000; background: #fff; }
.clip { flex: 1; overflow: hidden; }
.quotes { height: 313px; }
.nav { height: 230px; }
table { border-collapse: separate; border-spacing: 0; table-layout: fixed; width: 100%; }
th, td { font-weight: normal; padding: 0; white-space: nowrap; text-align: right; box-sizing: border-box; }
th { height: 24px; border-right: 1px solid #e0e2e6; border-bottom: 1px solid #d0d3d8; background: linear-gradient(#fff 50%, #f3f4f6 50%); }
td { height: 21px; border-right: 1px solid #c8c8c8; border-bottom: 1px solid #c8c8c8; }
th:first-child, td:first-child { text-align: left; }
.quotes th:nth-child(1) { width: 96px; padding-left: 6px; }
.quotes th:nth-child(2), .quotes th:nth-child(3) { width: 63px; padding-right: 5px; }
.quotes th:nth-child(4) { padding-right: 7px; border-right: 0; }
.quotes td { padding-right: 3px; }
.quotes td:last-child { border-right: 0; padding-right: 5px; }
.quotes td:first-child { padding-left: 3px; color: #000; }
.quotes td svg { display: inline-block; margin-right: 5px; vertical-align: -2px; }
.quotes .down { color: #f00; }
.quotes .up { color: #00f; }
.lime { background: #adff2f; }
.sand { background: #ffdead; }
.mint { background: #f0fff0; }
.quotes .sel, .quotes .sel td { background: #3399ff; color: #fff; }
.scroll { display: flex; flex-direction: column; align-items: center; width: 16px; background: #f0f0f0; }
.thumb { width: 13px; height: 61px; border: 1px solid #979797; border-radius: 2px; background: repeating-linear-gradient(#666 0 1px, transparent 1px 3px) center / 7px 9px no-repeat, linear-gradient(90deg, #f4f4f4, #d4d4d8); }
.ar { display: flex; justify-content: center; align-items: center; width: 14px; height: 16px; }
.ar.dn { margin-top: auto; }
.ar::after, .lots b, .tri { content: ""; border: 4px solid transparent; border-top-width: 0; border-bottom-color: #444; }
.ar.up::after { border-width: 0 3px 3px; }
.ar.dn::after { border-width: 3px 3px 0; border-top-color: #444; }
.nav li { display: flex; align-items: center; height: 20px; gap: 6px; }
.nav .root { padding-left: 5px; height: 21px; }
.branch { display: flex; align-items: center; width: 12px; height: 20px; margin: 0 -6px 0 13px; background: linear-gradient(#888, #888) 6px 9px / 6px 1px no-repeat; border-left: 1px dotted #888; }
.l2 .branch { margin-left: 21px; }
.l2::before { content: ""; width: 0; height: 20px; margin: 0 -7px 0 13px; border-left: 1px dotted #888; }
.pm { width: 7px; height: 7px; margin-left: -5px; border: 1px solid #919191; background: #fff; color: #27468a; font-size: 10px; line-height: 6px; text-align: center; }

.tabs { display: flex; height: 23px; padding-left: 6px; color: #666; }
.panel .tabs { margin-left: 3px; padding-left: 4px; }
.tabs button { display: flex; align-items: center; height: 16px; margin-top: 3px; padding: 0 10px; border-right: 1px solid #666; white-space: nowrap; }
.tabs .cur { height: 21px; margin: -1px 0 0 -1px; border: 1px solid #000; border-top: 0; background: #fff; color: #000; padding: 3px 9px 0; box-shadow: 1px 1px #888; }
.tabs sub { color: #f00; font-size: 10px; line-height: 10px; align-self: flex-end; }

.mdiarea { flex: 1; min-width: 0; margin-left: 2px; border-left: 1px solid #606060; }
.chart { display: grid; grid-template-columns: minmax(0, 1fr) 32px; row-gap: 1px; padding: 2px 0 0 1px; border-top: 1px solid #808080; background: #000; color: #fff; font-size: 9px; line-height: 12px; }
.chart ol { font-size: 9px; }
.plot { position: relative; border: 1px solid #fff; overflow: hidden; }
.plot p { position: absolute; white-space: nowrap; font-size: 9px; }
.plot svg { width: 100%; }
.main { height: 467px; }
.sub { height: 116px; }
.plot .ohlc { left: 14px; top: 2px; }
.ohlc::before { content: ""; position: absolute; left: -11px; top: 4px; border: 4px solid transparent; border-top: 0; border-bottom-color: #fff; }
.plot .stat { display: flex; gap: 6px; left: 238px; top: 3px; color: #ff0; font: 11px/15px "Liberation Sans", "Noto Sans CJK SC", sans-serif; }
.stat button { width: 16px; height: 14px; border-radius: 2px; background: #26303a; font-weight: bold; line-height: 13px; }
.plot .big { left: 202px; top: 54px; font: 52px/68px "Liberation Sans", sans-serif; }
.plot .count { left: 1320px; top: 333px; color: #ff0; font: 18px/20px "DejaVu Sans", sans-serif; }
.plot .ao { left: 2px; top: 3px; width: 55px; padding-left: 2px; background: #008000; line-height: 11px; }
.trade { position: absolute; left: 3px; top: 19px; display: grid; grid-template-columns: 53px 54px 2px 57px 53px; width: 219px; background: #000; }
.side-t { grid-column: 1; height: 24px; background: #4a4aff; font-size: 12px; box-shadow: inset 0 -1px #2020b0; }
.lots + .side-t { grid-column: 5; }
.lots { grid-column: 2 / 5; display: flex; height: 22px; box-sizing: border-box; margin: 0 2px; border: 2px solid #999; background: #fff; }
.lots i { display: flex; align-items: center; justify-content: center; width: 19px; background: #ddd; }
.lots b { border-bottom-color: #5a78b8; border-width: 0 3px 3px; }
.lots .d { transform: rotate(180deg); }
.lots input { flex: 1; min-width: 0; padding-right: 4px; text-align: right; color: #000; font-size: 12px; }
.px { grid-column: 1 / 3; height: 40px; margin-right: -1px; padding-left: 5px; background: linear-gradient(#3434e0, #0000a4); font-size: 12px; font-weight: bold; line-height: 36px; text-align: center; white-space: nowrap; }
.px + .px { grid-column: 4 / 6; margin: 0 0 0 -1px; }
.px em { font: 32px/36px "Noto Sans", sans-serif; vertical-align: -3px; }
.scale { margin: -13px 0; }
.scale li { display: flex; align-items: center; height: 33px; }
.scale span { padding-left: 4px; font-size: 9px; }
.scale span::before { content: ""; display: inline-block; width: 3px; height: 1px; margin: 0 2px 3px -5px; background: #fff; }
.scale .now span { background: #fff; color: #000; margin-left: 1px; padding: 0 8px 0 3px; }
.levels { display: flex; flex-direction: column; align-items: flex-start; padding: 1px 0 1px 1px; }
.levels li { background: #008000; padding: 0 1px; margin-bottom: 5px; }
.levels li:last-child { margin: auto 0 0; }
.times { grid-column: 1 / 3; display: flex; height: 20px; margin-top: -1px; }
.times li { flex: none; width: 64px; box-sizing: border-box; padding-top: 3px; background: linear-gradient(#fff, #fff) 1px 0 / 1px 3px no-repeat; }
.ctabs { height: 22px; border-top: 1px solid #000; padding-left: 4px; }
.ctabs button { padding: 0 12px; }
.ctabs .cur { padding: 3px 13px 0; }
.more { margin: 4px 13px 0 auto; height: 0; border: 4px solid transparent; border-left: 0; border-right-color: #777; }

.terminal { position: relative; flex: 1; display: flex; min-height: 0; margin-top: 3px; }
.strip { display: flex; flex-direction: column; width: 15px; flex: none; border-right: 1px solid #a0a0a0; }
.strip button { height: 16px; }
.strip div { flex: 1; display: flex; align-items: flex-end; margin: 0 1px 3px; background: linear-gradient(#d6e3f0, #b6c6d8); }
.strip span { writing-mode: vertical-rl; line-height: 13px; color: #3a4650; }
.body { flex: 1; min-width: 0; display: flex; flex-direction: column; border-top: 1px solid #a0a0a0; }
.grid { flex: 1; overflow: hidden; background: #fff; border-bottom: 1px solid #000; }
.grid table { width: calc(100% + 10px); }
.grid th { height: 24px; padding-right: 4px; border-bottom: 2px solid #d0d3d8; }
.grid th:first-child { padding-left: 6px; }
.grid th small { margin-left: 6px; color: #888; }
.grid th:last-child { padding-right: 7px; }
.grid td { padding-right: 3px; }
.grid tr:nth-child(2) td { background: #ebebeb; border-bottom: 0; }
.grid tr:nth-child(2) .hit { background: #ffa0a0; }
.grid td:first-child { padding-left: 1px; }
.grid td svg { display: inline-block; margin-right: 4px; vertical-align: top; }
.grid .sum td { background: #c8c8c8; border: 0; font-weight: bold; }
.sum i { display: inline-block; width: 5px; height: 5px; margin: 0 7px 0 7px; border: 1px solid #888; border-radius: 4px; background: #ddd; }
.body .tabs { height: 28px; padding-left: 1px; }
.ime { position: absolute; left: 1240px; bottom: 9px; display: flex; align-items: center; gap: 6px; height: 22px; padding-right: 4px; border: 1px solid #9aa4bc; background: #fff; color: #1f7ad0; font-size: 14px; }
.ime svg:first-child { margin-left: -3px; margin-right: -1px; }

.status { display: flex; align-items: center; height: 22px; border-top: 1px solid #a0a0a0; box-shadow: inset 0 1px #fff; }
.status span { height: 16px; box-sizing: border-box; border-left: 1px solid #b0b0b0; padding-left: 5px; }
.status .hint { flex: 1; border: 0; padding-left: 2px; }
.c1 { width: 136px; }
.c2 { width: 117px; }
.c3 { width: 81px; }
.c4 { width: 158px; }
.status .net { display: flex; gap: 12px; width: 208px; padding-left: 82px; }

.task { display: flex; align-items: center; gap: 3px; height: 40px; box-sizing: border-box; border-top: 1px solid #1c3048; color: #fff; background: linear-gradient(#6d8cae, #8fa8c4 4px, #86a1be 60%, #4a7098 75%, #3f668e); }
.start { width: 57px; padding-left: 8px; box-sizing: border-box; }
.win { display: flex; align-items: center; gap: 5px; flex: 0 1 159px; height: 38px; box-sizing: border-box; padding: 0 0 2px 8px; border: 1px solid #33506e; border-radius: 3px; box-shadow: inset 0 0 0 1px #b4c6d8; background: linear-gradient(165deg, #b8c8d8, #8ea8c2 40%, #6c8cae 45%, #7f9dbb); white-space: nowrap; text-shadow: 0 0 3px #23405e; }
.win.active { background: linear-gradient(165deg, #f4ecfa, #d8c4ee 40%, #a888d8 45%, #b79ae0); box-shadow: inset 0 0 0 1px #efe4fa; text-shadow: 0 0 3px #502890; }
.tile { display: flex; flex-direction: column; align-items: center; justify-content: center; width: 32px; height: 32px; font-size: 16px; line-height: 18px; text-shadow: none; }
.tile.we { background: #23304e; font-size: 20px; border-radius: 3px; }
.tile.cpt { background: #5a10b0; }
.tile small { font-size: 5px; line-height: 6px; }
.tray { display: flex; align-items: center; gap: 9px; margin-left: auto; margin-right: 8px; }
.tri { border-bottom-color: #fff; }
time { width: 76px; text-align: center; line-height: 18px; }
.mark { position: absolute; right: 26px; bottom: 8px; display: flex; align-items: center; gap: 8px; color: #fff; pointer-events: none; text-shadow: 1px 1px 2px #777; }
.mark span { font: bold 72px/76px "Liberation Sans", sans-serif; }
.mark b { font: 900 64px/76px "Noto Sans CJK SC", sans-serif; }
</style>
